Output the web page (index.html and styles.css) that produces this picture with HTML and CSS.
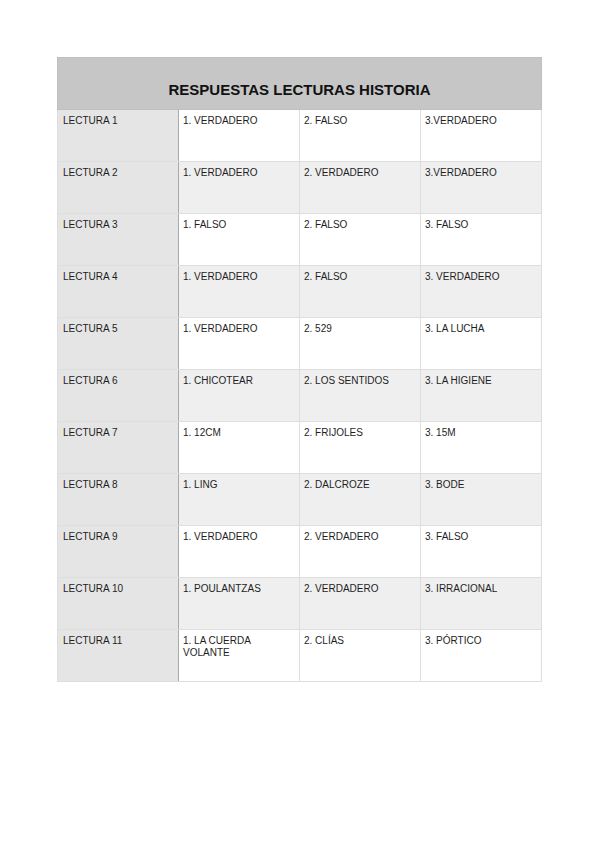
FILE: index.html
```html
<!DOCTYPE html>
<html lang="es">
<head>
<meta charset="utf-8">
<title>Respuestas Lecturas Historia</title>
<link rel="stylesheet" href="styles.css">
</head>
<body>
<div class="page">
  <table class="answers">
    <thead>
      <tr><th colspan="4" class="title">RESPUESTAS LECTURAS HISTORIA</th></tr>
    </thead>
    <tbody>
      <tr><td class="label">LECTURA 1</td><td>1. VERDADERO</td><td>2. FALSO</td><td>3.VERDADERO</td></tr>
      <tr class="alt"><td class="label">LECTURA 2</td><td>1. VERDADERO</td><td>2. VERDADERO</td><td>3.VERDADERO</td></tr>
      <tr><td class="label">LECTURA 3</td><td>1. FALSO</td><td>2. FALSO</td><td>3. FALSO</td></tr>
      <tr class="alt"><td class="label">LECTURA 4</td><td>1. VERDADERO</td><td>2. FALSO</td><td>3. VERDADERO</td></tr>
      <tr><td class="label">LECTURA 5</td><td>1. VERDADERO</td><td>2. 529</td><td>3. LA LUCHA</td></tr>
      <tr class="alt"><td class="label">LECTURA 6</td><td>1. CHICOTEAR</td><td>2. LOS SENTIDOS</td><td>3. LA HIGIENE</td></tr>
      <tr><td class="label">LECTURA 7</td><td>1. 12CM</td><td>2. FRIJOLES</td><td>3. 15M</td></tr>
      <tr class="alt"><td class="label">LECTURA 8</td><td>1. LING</td><td>2. DALCROZE</td><td>3. BODE</td></tr>
      <tr><td class="label">LECTURA 9</td><td>1. VERDADERO</td><td>2. VERDADERO</td><td>3. FALSO</td></tr>
      <tr class="alt"><td class="label">LECTURA 10</td><td>1. POULANTZAS</td><td>2. VERDADERO</td><td>3. IRRACIONAL</td></tr>
      <tr><td class="label">LECTURA 11</td><td>1. LA CUERDA<br>VOLANTE</td><td>2. CLÍAS</td><td>3. PÓRTICO</td></tr>
    </tbody>
  </table>
</div>
</body>
</html>
```
FILE: styles.css
```css
html, body {
  margin: 0;
  padding: 0;
  background: #ffffff;
}

.page {
  padding: 57px 0 0 57px;
}

.answers {
  border-collapse: collapse;
  table-layout: fixed;
  width: 485px;
  font-family: "Liberation Sans", Arial, sans-serif;
  color: #1e1e1e;
}

.title {
  height: 52px;
  box-sizing: border-box;
  background: #c6c6c6;
  border: 1px solid #c0c0c0;
  font-size: 15px;
  font-weight: bold;
  text-align: center;
  vertical-align: bottom;
  padding: 0 0 11px 0;
  color: #111111;
}

.answers td {
  width: 121px;
  height: 52px;
  box-sizing: border-box;
  border: 1px solid #dedede;
  font-size: 10px;
  line-height: 12px;
  vertical-align: top;
  padding: 5px 5px 0 4px;
  background: #ffffff;
}

.answers tr.alt td {
  background: #efefef;
}

.answers td.label,
.answers tr.alt td.label {
  background: #e5e5e5;
  border-right: 1px solid #a9a9a9;
  padding-left: 5px;
}
```
